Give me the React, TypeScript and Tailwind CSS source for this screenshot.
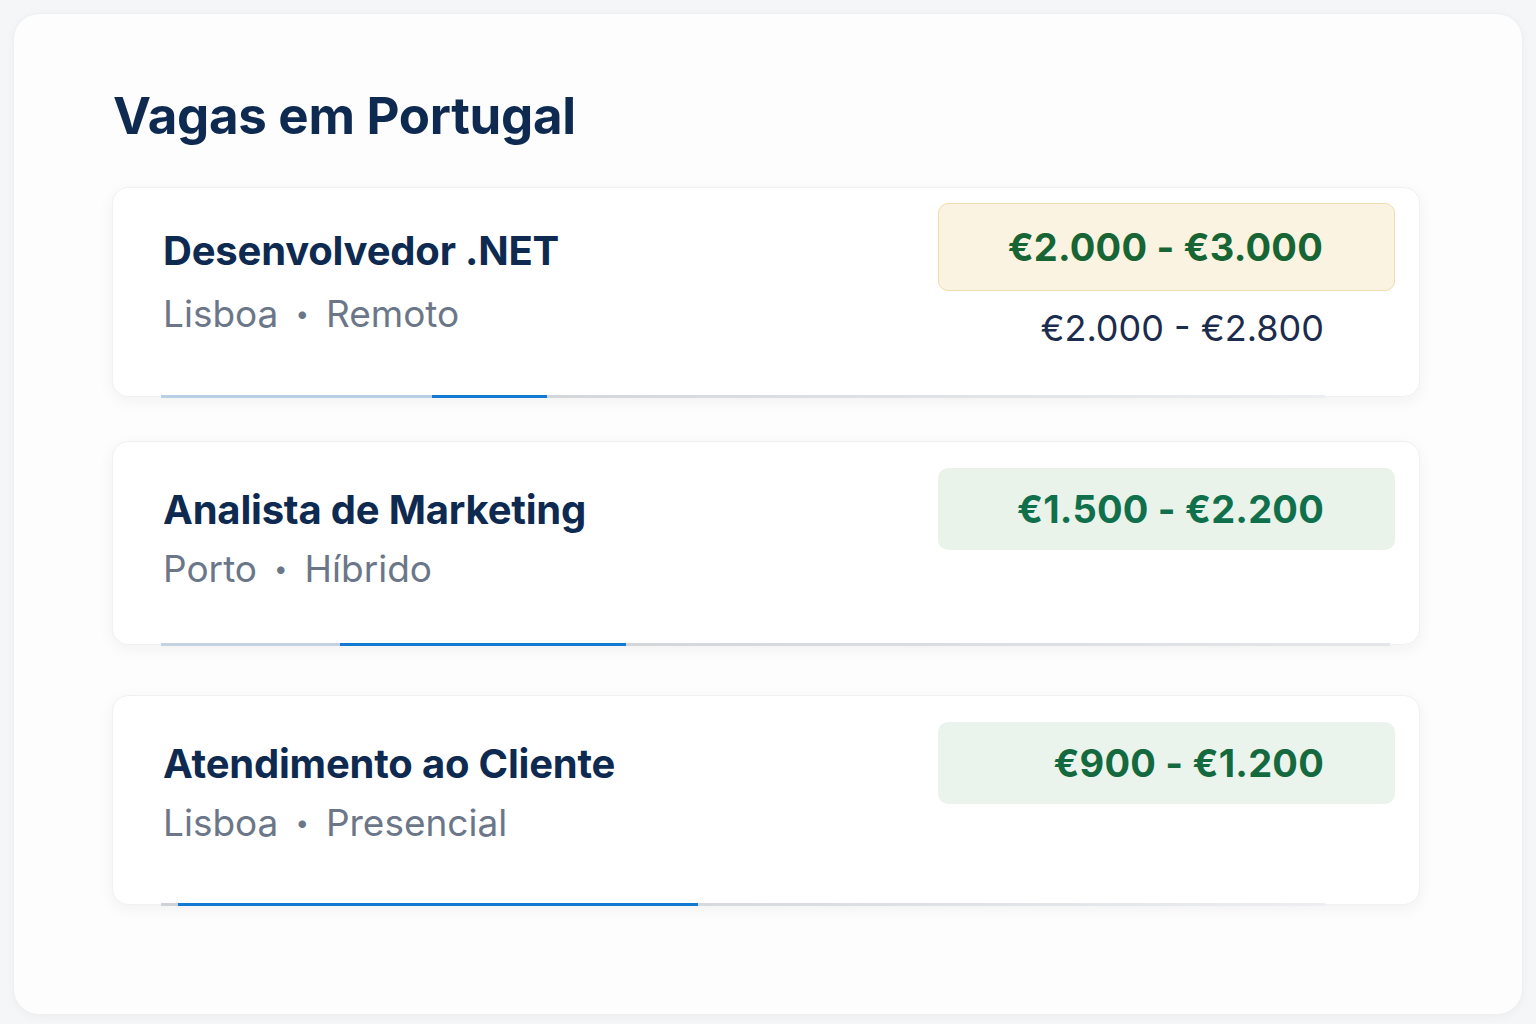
import React from "react";

type Seg = { w: number; color: string };

type Job = {
  title: string;
  city: string;
  mode: string;
  salary: string;
  extra?: string;
  badge: string;
  salaryColor: string;
  height: string;
  badgeH: string;
  badgePt: string;
  titlePt: string;
  subMt: string;
  bar: Seg[];
};

const jobs: Job[] = [
  {
    title: "Desenvolvedor .NET",
    city: "Lisboa",
    mode: "Remoto",
    salary: "€2.000 - €3.000",
    extra: "€2.000 - €2.800",
    badge: "bg-[#fbf3e1] border border-[#f1dcae]",
    salaryColor: "text-[#176534]",
    height: "h-[210px]",
    badgeH: "h-[88px]",
    badgePt: "pt-[15px]",
    titlePt: "pt-[39px]",
    subMt: "mt-[17px]",
    bar: [
      { w: 271, color: "bg-[#b9cfe6]" },
      { w: 115, color: "bg-[#1479d2]" },
      { w: 778, color: "bg-gradient-to-r from-[#d3d6db] to-[#eceef1]" },
    ],
  },
  {
    title: "Analista de Marketing",
    city: "Porto",
    mode: "Híbrido",
    salary: "€1.500 - €2.200",
    badge: "bg-[#e9f3ea]",
    salaryColor: "text-[#11704c]",
    height: "h-[204px]",
    badgeH: "h-[82px]",
    badgePt: "pt-[26px]",
    titlePt: "pt-[44px]",
    subMt: "mt-[13px]",
    bar: [
      { w: 179, color: "bg-[#c3d3e3]" },
      { w: 286, color: "bg-[#1479d2]" },
      { w: 764, color: "bg-gradient-to-r from-[#d3d6db] to-[#e4e6ea]" },
    ],
  },
  {
    title: "Atendimento ao Cliente",
    city: "Lisboa",
    mode: "Presencial",
    salary: "€900 - €1.200",
    badge: "bg-[#ebf4ec]",
    salaryColor: "text-[#146a3e]",
    height: "h-[210px]",
    badgeH: "h-[82px]",
    badgePt: "pt-[26px]",
    titlePt: "pt-[44px]",
    subMt: "mt-[13px]",
    bar: [
      { w: 17, color: "bg-[#cfd3d8]" },
      { w: 520, color: "bg-[#1479d2]" },
      { w: 627, color: "bg-gradient-to-r from-[#d6d9de] to-[#eceef1]" },
    ],
  },
];

function JobCard({ job }: { job: Job }) {
  return (
    <div
      className={`${job.height} flex flex-col rounded-2xl bg-white border border-[#f0f1f3] shadow-[0_4px_16px_rgba(15,23,42,0.05)]`}
    >
      <div className="flex flex-1 justify-between pl-[50px] pr-[24px]">
        <div className={job.titlePt}>
          <h2 className="text-[40px] leading-[48px] font-bold tracking-[-0.2px] text-[#0e2a50]">
            {job.title}
          </h2>
          <p className={`${job.subMt} text-[37px] leading-[44px] text-[#6b7789] flex items-center`}>
            <span>{job.city}</span>
            <span className="mx-[17px] text-[24px]">•</span>
            <span>{job.mode}</span>
          </p>
        </div>
        <div className={`w-[457px] flex flex-col ${job.badgePt}`}>
          <div
            className={`${job.badgeH} ${job.badge} rounded-[10px] flex items-center justify-end pr-[71px]`}
          >
            <span className={`text-[38px] font-bold tracking-[0.2px] ${job.salaryColor}`}>{job.salary}</span>
          </div>
          {job.extra && (
            <p className="mt-[16px] pr-[71px] text-right text-[36px] leading-[42px] text-[#1c2c4c]">
              {job.extra}
            </p>
          )}
        </div>
      </div>
      <div className="flex h-[3px] ml-[48px] -mb-[2px]">
        {job.bar.map((s, i) => (
          <div key={i} className={`${s.color} h-full`} style={{ width: s.w }} />
        ))}
      </div>
    </div>
  );
}

export default function App() {
  return (
    <div
      className="w-[1536px] h-[1024px] bg-[#f5f6f7] p-[13px]"
      style={{ fontFamily: "Inter, 'Noto Sans', sans-serif" }}
    >
      <div className="h-[1002px] rounded-[26px] bg-[#fdfdfd] border border-[#eeeff1] shadow-[0_2px_10px_rgba(0,0,0,0.04)] pl-[98px] pr-[102px] pt-[74px]">
        <h1 className="text-[51px] leading-[56px] font-bold tracking-[-0.3px] text-[#0e2a50] pl-[1px]">
          Vagas em Portugal
        </h1>
        <div className="mt-[43px] flex flex-col">
          <JobCard job={jobs[0]} />
          <div className="h-[44px]" />
          <JobCard job={jobs[1]} />
          <div className="h-[50px]" />
          <JobCard job={jobs[2]} />
        </div>
      </div>
    </div>
  );
}
